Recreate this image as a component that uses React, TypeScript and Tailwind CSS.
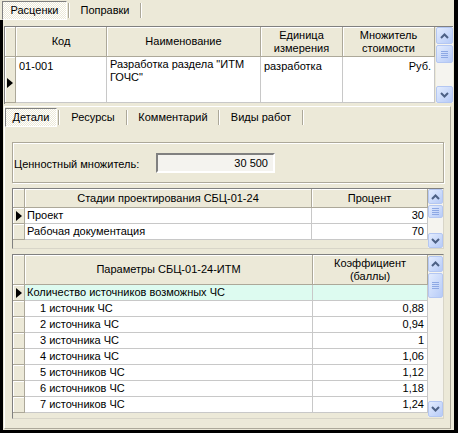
import React from "react";

const Tri = () => (
  <svg width="6" height="10" viewBox="0 0 6 10">
    <path d="M0 0 L6 5 L0 10 Z" fill="#000" />
  </svg>
);

const Arrow = ({ up }: { up?: boolean }) => (
  <svg width="9" height="6" viewBox="0 0 9 6">
    <path
      d={up ? "M1 5 L4.5 1.5 L8 5" : "M1 1 L4.5 4.5 L8 1"}
      stroke="#4D6185"
      strokeWidth="2"
      fill="none"
    />
  </svg>
);

const btnCls =
  "flex items-center justify-center rounded-[2px] border border-[#B4C7F2] bg-gradient-to-br from-[#E3ECFE] to-[#B7CBF7] shrink-0";

// XP style vertical scroll bar
function ScrollBar({
  className,
  btn,
  gap,
  thumb,
}: {
  className: string;
  btn: string;
  gap: string;
  thumb: string;
}) {
  return (
    <div className={`flex flex-col bg-[#F5F4EF] ${className}`}>
      <div className={`${btnCls} ${btn}`}>
        <Arrow up />
      </div>
      <div className={gap} />
      <div className={`${btnCls} ${thumb} flex-col gap-[1px]`}>
        <div className="h-[1px] w-[7px] bg-[#8DA8E4]" />
        <div className="h-[1px] w-[7px] bg-[#8DA8E4]" />
        <div className="h-[1px] w-[7px] bg-[#8DA8E4]" />
        <div className="h-[1px] w-[7px] bg-[#8DA8E4]" />
      </div>
      <div className="flex-1" />
      <div className={`${btnCls} ${btn}`}>
        <Arrow />
      </div>
    </div>
  );
}

const hdr =
  "flex items-center justify-center text-center leading-[13px] border-r border-b border-[#ACA899] shadow-[inset_1px_1px_0_#fff] shrink-0";
const ind =
  "flex items-center justify-center border-r border-b border-[#ACA899] shadow-[inset_1px_1px_0_#fff] shrink-0";
const cell = "bg-white border-r border-b border-[#C8C8C8] shrink-0 overflow-hidden";

function Tab({ label, active, className }: { label: string; active?: boolean; className: string }) {
  return (
    <div className="flex items-stretch">
      <div
        className={`flex items-center justify-center ${className} ${
          active
            ? "border border-t-[#808080] border-l-[#808080] border-r-white border-b-white bg-[image:repeating-conic-gradient(#ffffff_0%_25%,#ECE9D8_0%_50%)] bg-[length:2px_2px]"
            : ""
        }`}
      >
        {label}
      </div>
      <div className="flex mx-[1px] my-[2px]">
        <div className="w-[1px] bg-[#ACA899]" />
        <div className="w-[1px] bg-white" />
      </div>
    </div>
  );
}

const stages = [
  ["Проект", "30"],
  ["Рабочая документация", "70"],
];

const params = [
  ["1 источник ЧС", "0,88"],
  ["2 источника ЧС", "0,94"],
  ["3 источника ЧС", "1"],
  ["4 источника ЧС", "1,06"],
  ["5 источников ЧС", "1,12"],
  ["6 источников ЧС", "1,18"],
  ["7 источников ЧС", "1,24"],
];

export default function App() {
  return (
    <div className="w-[458px] h-[433px] bg-black flex flex-col font-['Liberation_Sans',Arial,sans-serif] text-[11px] text-black overflow-hidden">
      {/* top tab strip */}
      <div className="w-[454px] h-[20px] bg-[#ECE9D8] flex pl-[2px] pt-[1px] shrink-0">
        <Tab label="Расценки" active className="w-[65px] h-[19px]" />
        <Tab label="Поправки" className="w-[68px] h-[19px]" />
      </div>

      <div className="ml-[3px] w-[451px] h-[410px] bg-[#ECE9D8] flex flex-col shrink-0">
        {/* top grid */}
        <div className="mt-[6px] ml-[1px] w-[449px] h-[78px] border-t border-l border-[#808080] flex shrink-0">
          <div className="flex flex-col w-[430px]">
            <div className="flex h-[30px]">
              <div className={`${ind} w-[11px]`} />
              <div className={`${hdr} w-[91px]`}>Код</div>
              <div className={`${hdr} w-[154px]`}>Наименование</div>
              <div className={`${hdr} w-[82px]`}>
                Единица
                <br />
                измерения
              </div>
              <div className={`${hdr} w-[92px]`}>
                Множитель
                <br />
                стоимости
              </div>
            </div>
            <div className="flex h-[46px]">
              <div className={`${ind} w-[11px] pt-[6px]`}>
                <Tri />
              </div>
              <div className={`${cell} w-[91px] pl-[3px] pt-[1px] whitespace-nowrap`}>01-001</div>
              <div className={`${cell} w-[154px] pl-[3px] pr-[1px] pt-[1px] leading-[13px]`}>
                Разработка раздела "ИТМ ГОЧС"
              </div>
              <div className={`${cell} w-[82px] pl-[3px] pt-[1px] whitespace-nowrap`}>разработка</div>
              <div className={`${cell} w-[92px] pr-[3px] pt-[1px] text-right whitespace-nowrap`}>Руб.</div>
            </div>
          </div>
          <ScrollBar
            className="w-[17px] h-[76px] ml-[1px]"
            btn="w-[17px] h-[17px]"
            gap="h-[1px]"
            thumb="w-[17px] h-[18px]"
          />
        </div>

        {/* page control */}
        <div className="mt-[2px] ml-[1px] w-[447px] h-[323px] border border-t-white border-l-white border-r-[#ACA899] border-b-[#ACA899] flex flex-col shrink-0">
          <div className="flex h-[19px] mt-[1px]">
            <Tab label="Детали" active className="w-[52px] h-[19px]" />
            <Tab label="Ресурсы" className="w-[64px] h-[19px]" />
            <Tab label="Комментарий" className="w-[88px] h-[19px]" />
            <Tab label="Виды работ" className="w-[80px] h-[19px]" />
          </div>

          {/* value multiplier */}
          <div className="mt-[15px] ml-[7px] w-[432px] h-[41px] border border-[#ACA899] shadow-[inset_1px_1px_0_#fff,1px_1px_0_#fff] flex items-center shrink-0">
            <span className="ml-[1px] mt-[3px] w-[142px] whitespace-nowrap">Ценностный множитель:</span>
            <div className="mt-[1px] w-[119px] h-[20px] border-2 border-t-[#808080] border-l-[#808080] border-r-white border-b-white bg-[#F4F3EF] flex items-center justify-end pr-[5px]">
              30 500
            </div>
          </div>

          {/* stages grid */}
          <div className="mt-[5px] ml-[7px] w-[432px] h-[61px] border border-t-[#808080] border-l-[#808080] border-r-[#D8D5C8] border-b-[#D8D5C8] flex shrink-0">
            <div className="flex flex-col w-[415px]">
              <div className="flex h-[19px]">
                <div className={`${ind} w-[12px]`} />
                <div className={`${hdr} w-[287px]`}>Стадии проектирования СБЦ-01-24</div>
                <div className={`${hdr} w-[116px]`}>Процент</div>
              </div>
              {stages.map(([n, v], i) => (
                <div key={n} className="flex h-[16px]">
                  <div className={`${ind} w-[12px]`}>{i === 0 && <Tri />}</div>
                  <div className={`${cell} w-[287px] pl-[2px] leading-[15px] whitespace-nowrap`}>{n}</div>
                  <div className={`${cell} w-[116px] pr-[3px] text-right leading-[15px] whitespace-nowrap`}>{v}</div>
                </div>
              ))}
            </div>
            <ScrollBar
              className="w-[15px] h-[59px]"
              btn="w-[15px] h-[15px]"
              gap="h-[1px]"
              thumb="w-[15px] h-[13px]"
            />
          </div>

          {/* params grid */}
          <div className="mt-[5px] ml-[7px] w-[432px] h-[165px] border border-t-[#808080] border-l-[#808080] border-r-[#D8D5C8] border-b-[#D8D5C8] flex shrink-0">
            <div className="flex flex-col w-[415px]">
              <div className="flex h-[30px]">
                <div className={`${ind} w-[12px]`} />
                <div className={`${hdr} w-[288px]`}>Параметры СБЦ-01-24-ИТМ</div>
                <div className={`${hdr} w-[115px]`}>
                  Коэффициент
                  <br />
                  (баллы)
                </div>
              </div>
              <div className="flex h-[16px]">
                <div className={`${ind} w-[12px]`}>
                  <Tri />
                </div>
                <div className="w-[288px] bg-[#DDFBF0] border-r border-b border-[#C8C8C8] pl-[2px] leading-[15px] whitespace-nowrap">
                  Количество источников возможных ЧС
                </div>
                <div className="w-[115px] bg-[#DDFBF0] border-r border-b border-[#C8C8C8]" />
              </div>
              {params.map(([n, v]) => (
                <div key={n} className="flex h-[16px]">
                  <div className={`${ind} w-[12px]`} />
                  <div className={`${cell} w-[288px] pl-[15px] leading-[15px] whitespace-nowrap`}>{n}</div>
                  <div className={`${cell} w-[115px] pr-[3px] text-right leading-[15px] whitespace-nowrap`}>{v}</div>
                </div>
              ))}
            </div>
            <ScrollBar
              className="w-[15px] h-[161px] mt-[1px]"
              btn="w-[15px] h-[16px]"
              gap="h-[1px]"
              thumb="w-[15px] h-[25px]"
            />
          </div>
        </div>
      </div>
    </div>
  );
}
